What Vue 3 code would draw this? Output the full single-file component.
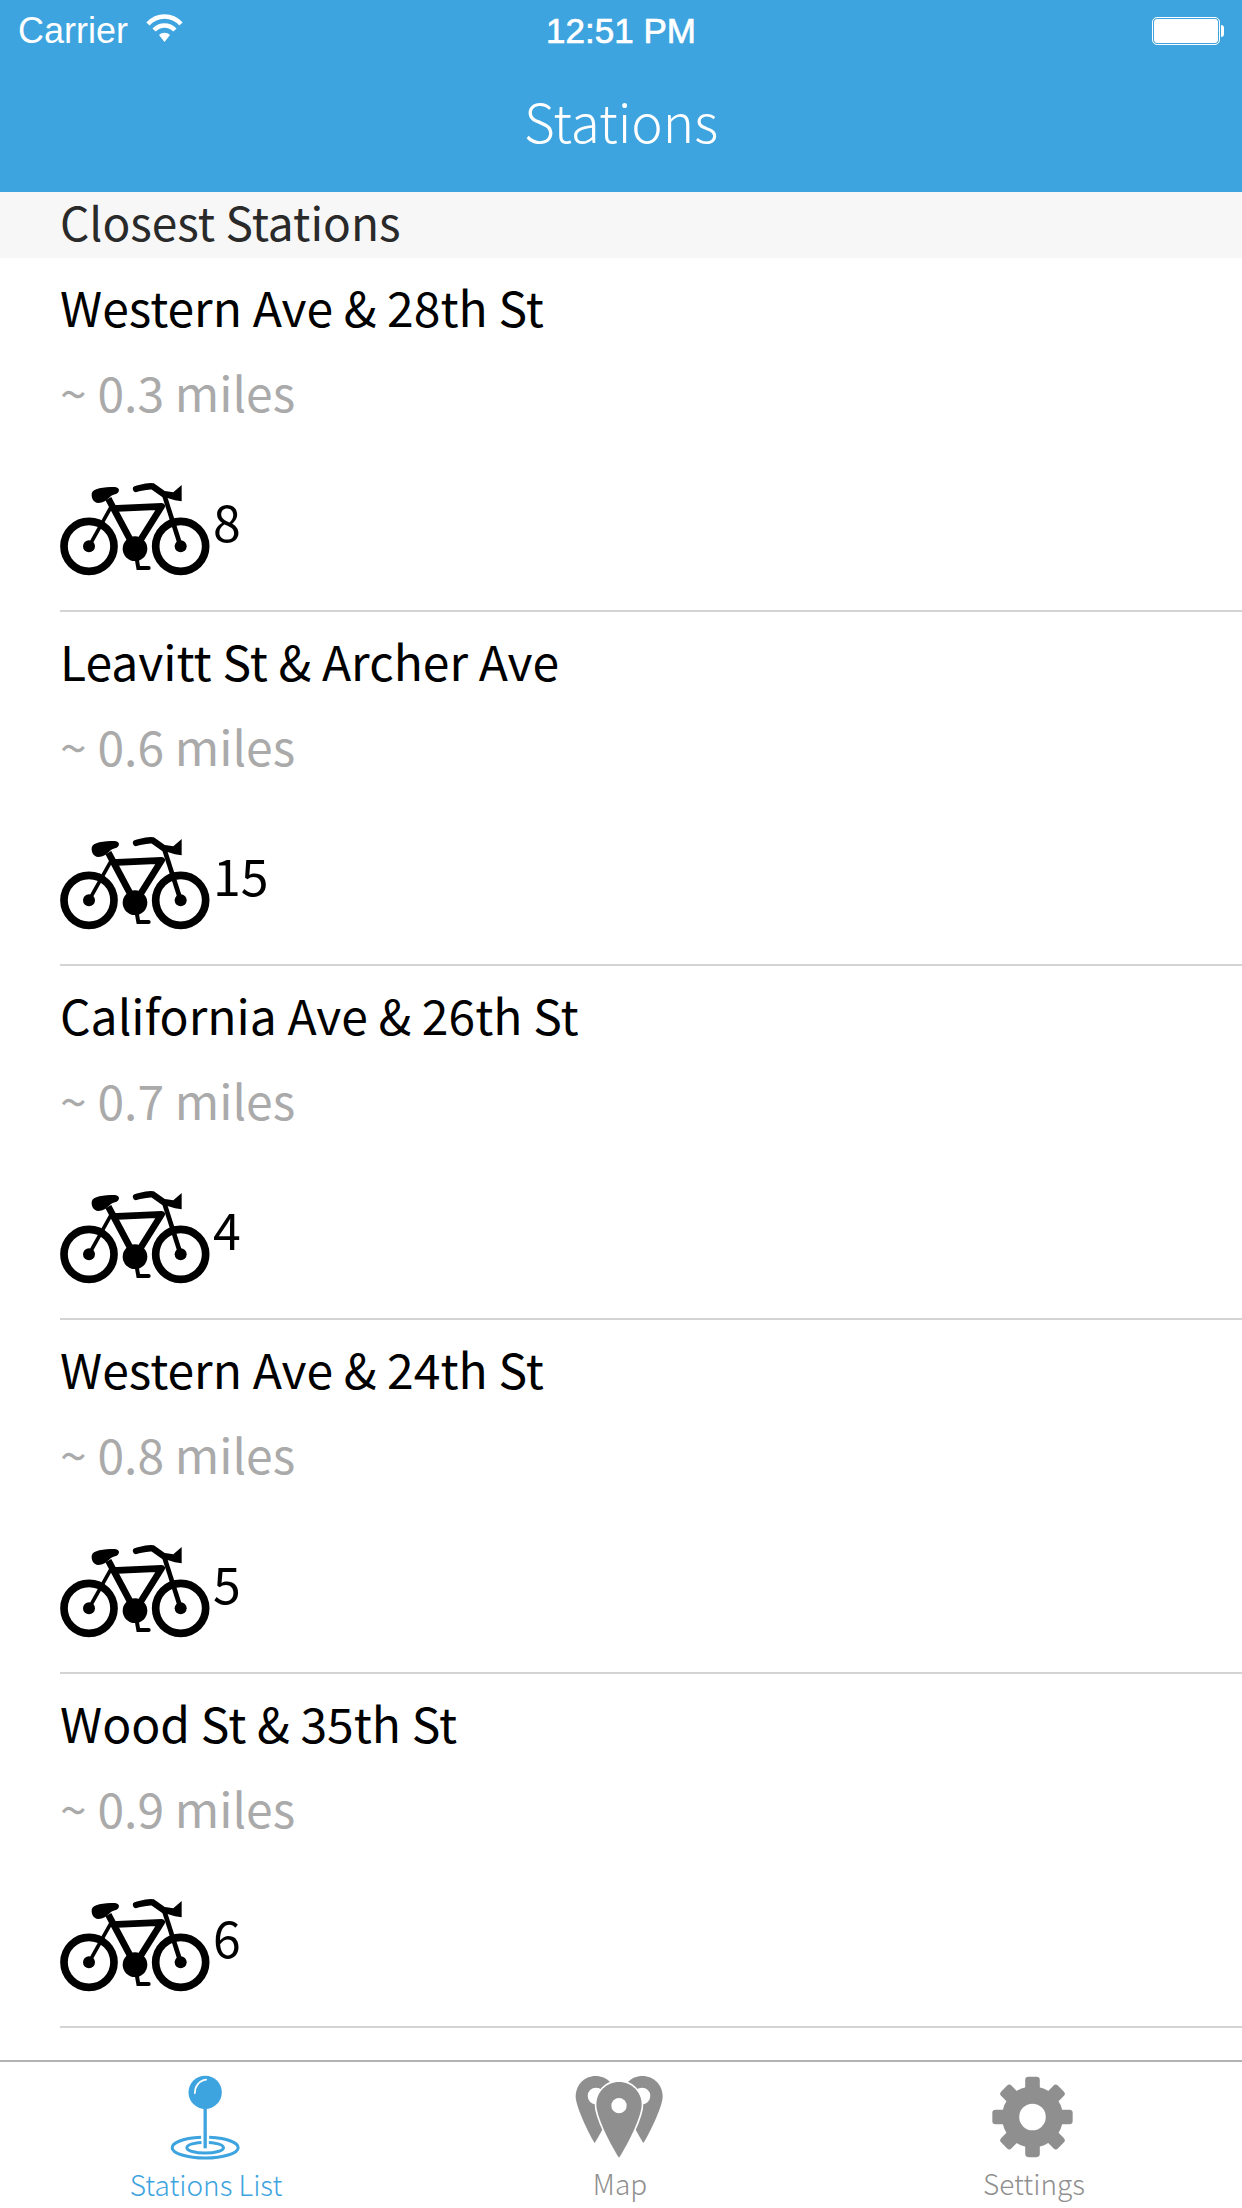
<template>
  <div class="screen">
    <header class="topbar">
      <div class="status">
        <div class="status-left">
          <span>Carrier</span>
          <svg class="wifi" viewBox="0 0 37 28" width="37" height="28">
            <path d="M2 10 C11 0 26 0 35 10" fill="none" stroke="#fff" stroke-width="4.5" />
            <path d="M8 16 C14 10 23 10 29 16" fill="none" stroke="#fff" stroke-width="4.5" />
            <path d="M13 21 C16 18 21 18 24 21 L18.5 28 Z" fill="#fff" />
          </svg>
        </div>
        <div class="status-time">12:51 PM</div>
        <div class="battery">
          <div class="battery-body"></div>
          <div class="battery-tip"></div>
        </div>
      </div>
      <h1>Stations</h1>
    </header>

    <div class="section-head">Closest Stations</div>

    <div class="list">
      <div class="row" v-for="s in stations" :key="s.name">
        <div class="name">{{ s.name }}</div>
        <div class="dist">~ {{ s.dist }} miles</div>
        <div class="bikes">
          <svg class="bike" viewBox="60 35 450 285" width="150" height="95">
            <circle cx="147" cy="228" r="75" fill="none" stroke="#000" stroke-width="23" />
            <circle cx="422" cy="228" r="75" fill="none" stroke="#000" stroke-width="23" />
            <circle cx="147" cy="228" r="18" />
            <circle cx="422" cy="228" r="18" />
            <circle cx="285" cy="235" r="37" />
            <path d="M147 228 L212 112" fill="none" stroke="#000" stroke-width="11" />
            <path d="M205 85 L285 235 L365 108 L215 115" fill="none" stroke="#000" stroke-width="20" stroke-linejoin="round" />
            <path d="M372 72 L422 228" fill="none" stroke="#000" stroke-width="14" />
            <path d="M155 70 C158 54 190 50 225 50 C242 52 240 68 225 72 C205 76 205 96 175 98 C160 96 154 84 155 70 Z" />
            <path d="M288 56 C305 52 320 46 338 48 L372 72" fill="none" stroke="#000" stroke-width="19" stroke-linecap="round" />
            <path d="M375 62 L400 66 L425 44 L425 93 L405 90 L380 82 Z" />
            <path d="M290 265 L295 293 L326 293" fill="none" stroke="#000" stroke-width="12" stroke-linecap="round" />
          </svg>
          <span class="count">{{ s.bikes }}</span>
        </div>
      </div>
    </div>

    <nav class="tabbar">
      <div class="tab active">
        <svg viewBox="205 105 215 255" width="72" height="85">
          <path d="M301 292 C240 295 214 310 214 323 C214 340 260 354 313 354 C366 354 412 340 412 323 C412 310 386 295 325 292" fill="none" stroke="#3ea4df" stroke-width="9" />
          <ellipse cx="313" cy="323" rx="55" ry="16" fill="none" stroke="#3ea4df" stroke-width="9" />
          <path d="M313 200 L313 325" stroke="#fff" stroke-width="22" />
          <path d="M313 200 L313 325" stroke="#3ea4df" stroke-width="10" />
          <circle cx="313" cy="157" r="50" fill="#3ea4df" />
          <path d="M282 160 C282 138 295 122 316 119" fill="none" stroke="#fff" stroke-width="5" stroke-linecap="round" />
        </svg>
        <span>Stations List</span>
      </div>
      <div class="tab">
        <svg viewBox="160 112 270 252" width="90" height="84">
          <path d="M225 115 C190 115 165 142 165 177 C165 205 205 290 222 316 C238 290 285 205 285 177 C285 142 260 115 225 115 Z" fill="#8f8f8f" />
          <path d="M365 115 C400 115 426 142 426 177 C426 205 385 290 368 316 C352 290 305 205 305 177 C305 142 330 115 365 115 Z" fill="#8f8f8f" />
          <circle cx="226" cy="175" r="25" fill="#fff" />
          <circle cx="364" cy="175" r="25" fill="#fff" />
          <path d="M295 133 C257 133 227 163 227 201 C227 240 275 330 295 360 C315 330 363 240 363 201 C363 163 333 133 295 133 Z" fill="#8f8f8f" stroke="#fff" stroke-width="10" paint-order="stroke" />
          <circle cx="295" cy="204" r="23" fill="#fff" />
        </svg>
        <span>Map</span>
      </div>
      <div class="tab">
        <svg viewBox="155 112 250 252" width="83" height="84">
          <g fill="#8f8f8f">
            <rect v-for="a in gearAngles" :key="a" x="258" y="117" width="44" height="60" rx="10" :transform="`rotate(${a} 280 238)`" />
            <circle cx="280" cy="238" r="92" />
          </g>
          <circle cx="280" cy="238" r="40" fill="#fff" />
        </svg>
        <span>Settings</span>
      </div>
    </nav>
  </div>
</template>

<script setup>
const stations = [
  { name: 'Western Ave & 28th St', dist: '0.3', bikes: 8 },
  { name: 'Leavitt St & Archer Ave', dist: '0.6', bikes: 15 },
  { name: 'California Ave & 26th St', dist: '0.7', bikes: 4 },
  { name: 'Western Ave & 24th St', dist: '0.8', bikes: 5 },
  { name: 'Wood St & 35th St', dist: '0.9', bikes: 6 },
]

const gearAngles = [0, 45, 90, 135, 180, 225, 270, 315]
</script>

<style>
html, body { background: #fff; }
</style>

<style scoped>
.screen {
  position: relative;
  width: 1242px;
  height: 2208px;
  overflow: hidden;
  background: #fff;
  font-family: "Noto Sans CJK KR", "Noto Sans", sans-serif;
}

.topbar {
  height: 192px;
  background: #3ea4df;
  color: #fff;
}

.status {
  display: flex;
  justify-content: space-between;
  align-items: center;
  height: 62px;
  padding: 0 18px;
  font-family: "Liberation Sans", Arial, sans-serif;
  font-size: 36px;
  position: relative;
}

.status-left { display: flex; align-items: center; gap: 18px; }

.wifi { margin-top: -6px; }

.status-time {
  position: absolute;
  left: 0;
  right: 0;
  text-align: center;
  font-size: 35px;
  -webkit-text-stroke: 0.7px #fff;
}

.battery { display: flex; align-items: center; }

.battery-body {
  width: 64px;
  height: 24px;
  background: #fff;
  border: 1px solid #3ea4df;
  outline: 1px solid #fff;
  border-radius: 4px;
}

.battery-tip {
  width: 3px;
  height: 12px;
  margin-left: 2px;
  background: #fff;
  border-radius: 0 4px 4px 0;
}

h1 {
  margin: 0;
  text-align: center;
  font-size: 53px;
  font-weight: 300;
  line-height: 116px;
  height: 130px;
}

.section-head {
  height: 66px;
  line-height: 58px;
  padding-left: 60px;
  background: #f7f7f7;
  color: #2a2a2a;
  font-size: 46px;
  font-weight: 400;
}

.row {
  height: 354px;
  box-sizing: border-box;
  margin-left: 60px;
  border-bottom: 2px solid #d4d4d4;
}

.name {
  height: 88px;
  line-height: 96px;
  font-size: 48px;
  color: #000;
}

.dist {
  height: 86px;
  line-height: 90px;
  font-size: 48px;
  color: #aaa;
}

.bikes {
  display: flex;
  align-items: flex-start;
  margin-top: 50px;
}

.bike { display: block; }

.count {
  font-size: 50px;
  line-height: 76px;
  margin-left: 3px;
  color: #000;
}

.tabbar {
  position: absolute;
  left: 0;
  right: 0;
  bottom: 0;
  height: 148px;
  box-sizing: border-box;
  display: flex;
  background: #fff;
  border-top: 2px solid #b2b2b2;
}

.tab {
  flex: 1;
  display: flex;
  flex-direction: column;
  align-items: center;
  padding-top: 13px;
  color: #8f8f8f;
  font-size: 28px;
  font-weight: 300;
  line-height: 40px;
}

.tab.active { color: #3ea4df; }

.tab svg { display: block; margin-right: 5px; }

.tab span { margin-top: 4px; margin-right: 2px; }
</style>
